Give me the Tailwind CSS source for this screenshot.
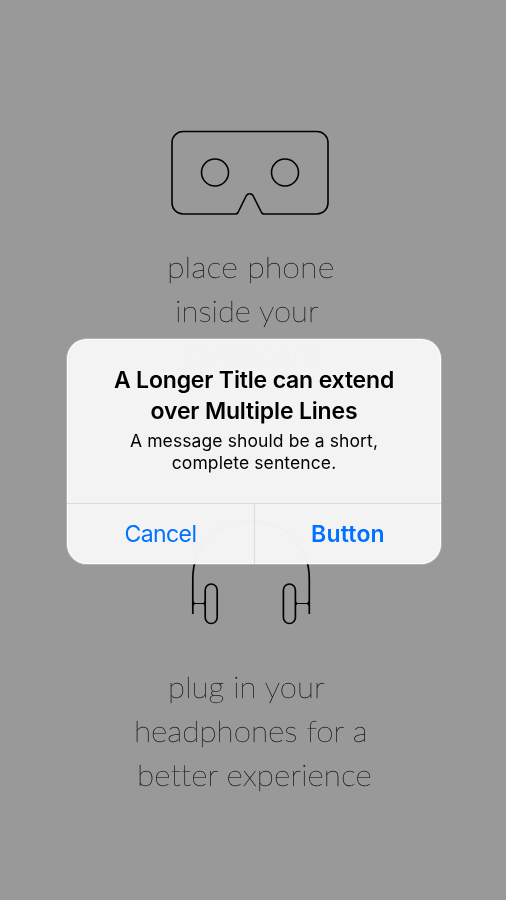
<!DOCTYPE html>
<html lang="en">
<head>
<meta charset="utf-8">
<meta name="viewport" content="width=device-width, initial-scale=1">
<title>Cardboard setup</title>
<script src="https://cdn.jsdelivr.net/npm/@tailwindcss/browser@4"></script>
</head>
<body class="bg-[#999]">
<main class="relative h-[900px] w-[506px] overflow-hidden bg-[#999] text-black">
  <section class="flex flex-col pt-[129px]">
    <svg class="ml-[170px] h-[87px] w-[160px]" viewBox="170 129 160 87" fill="none" stroke="#000" stroke-width="1.6" stroke-linejoin="round">
      <path d="M183 131.500H317A11 11 0 0 1 328 142.500V203A11 11 0 0 1 317 214H264Q262.300 214 261.500 212.500L253.500 196.500Q252.300 193.800 249.700 193.800Q247.100 193.800 245.900 196.500L238 212.500Q237.200 214 235.500 214H183A11 11 0 0 1 172 203V142.500A11 11 0 0 1 183 131.500Z"/>
      <circle cx="215" cy="172.500" r="13.500"/><circle cx="285" cy="172.500" r="13.500"/>
    </svg>
    <div class="mt-[29px] flex flex-col items-start whitespace-nowrap font-['Lato',sans-serif] text-[29.500px] leading-[44px] font-thin text-black/80 will-change-transform [-webkit-text-stroke:0.3px_rgba(0,0,0,0.75)]">
      <p class="ml-[167px] origin-left scale-x-[1.095]">place phone</p>
      <p class="ml-[175px] origin-left scale-x-[1.055]">inside your</p>
      <p class="ml-[182px] h-[30px] origin-left scale-x-[1.11] pt-[6px] leading-[30px]">cardboard</p>
    </div>
    <svg class="mt-[155px] ml-[190px] h-[107px] w-[122px]" viewBox="190 518 122 107" fill="none" stroke="#000" stroke-width="1.7">
      <path d="M192.800 614V579C192.800 545 218 521 251 521S309.300 545 309.300 579V614"/>
      <rect x="205.200" y="584" width="12" height="39.500" rx="6"/>
      <rect x="283.400" y="584" width="12" height="39.500" rx="6"/>
      <path stroke-width="1.200" d="M193 603.500H205M295.500 603.500H309"/>
      <path fill="#000" stroke="none" d="M193 601L195.500 603.500L193 606ZM205 601L202.800 603.500L205 606ZM295.500 601L297.700 603.500L295.500 606ZM309 601L306.500 603.500L309 606Z"/>
    </svg>
    <div class="mt-[40px] flex flex-col items-start whitespace-nowrap font-['Lato',sans-serif] text-[29.500px] leading-[44px] font-thin text-black/80 will-change-transform [-webkit-text-stroke:0.3px_rgba(0,0,0,0.75)]">
      <p class="ml-[168px] origin-left scale-x-[1.06]">plug in your</p>
      <p class="ml-[134px] origin-left scale-x-[1.068]">headphones for a</p>
      <p class="ml-[137px] origin-left scale-x-[1.07] [font-variant-ligatures:none]">better experience</p>
    </div>
  </section>

  <div role="alertdialog" class="absolute top-[339px] left-[67px] flex h-[225px] w-[374px] flex-col overflow-hidden rounded-[20px] bg-[#f5f5f5]/98 font-['Inter',sans-serif] shadow-[0_0_0_1px_rgba(255,255,255,0.25)] inset-shadow-[0_0_0_1px_rgba(255,255,255,0.8)]">
    <div class="flex h-[164px] flex-col items-center pt-[26px] text-center whitespace-nowrap">
      <h1 class="text-[23px] leading-[30.500px] font-semibold tracking-[-0.17px]">A Longer Title can extend<br>over Multiple Lines</h1>
      <p class="mt-[4px] text-[17.500px] leading-[22px] tracking-[0.1px]">A message should be a short,<br>complete sentence.</p>
    </div>
    <div class="grid flex-1 grid-cols-[188px_1fr] border-t border-[#dcdcdc] text-[23px] text-[#0072ff]">
      <button class="border-r border-[#dcdcdc] tracking-[-0.6px]">Cancel</button>
      <button class="font-semibold tracking-[0.2px]">Button</button>
    </div>
  </div>
</main>
</body>
</html>
